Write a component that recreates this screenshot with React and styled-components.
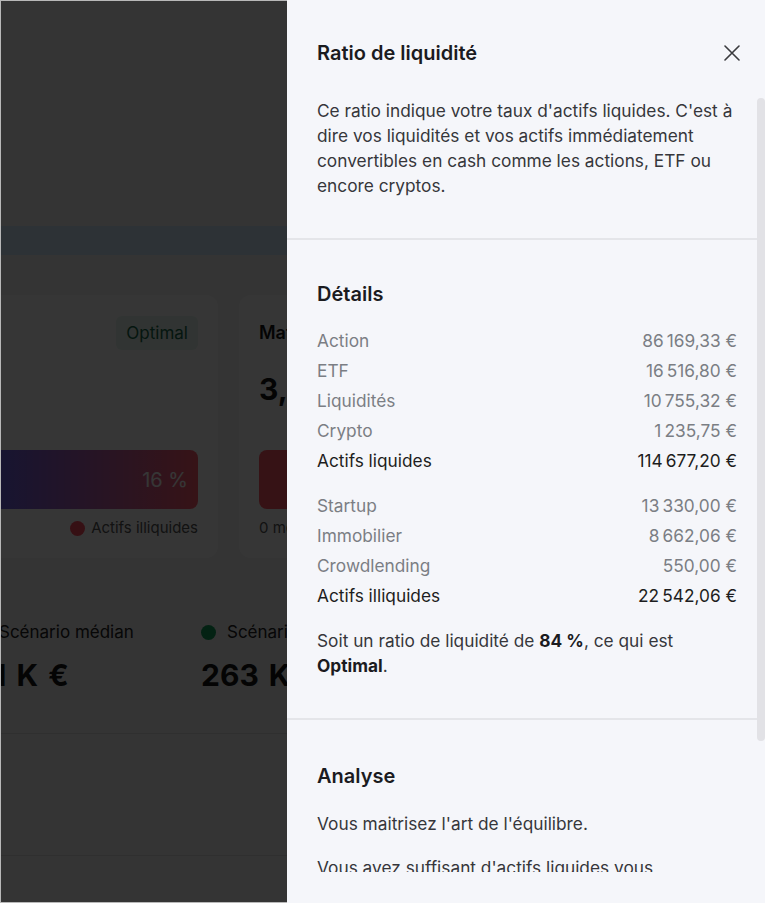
import React from 'react';
import styled, { createGlobalStyle } from 'styled-components';

const GlobalStyle = createGlobalStyle`
  html, body {
    margin: 0;
    padding: 0;
  }
  body {
    font-family: Inter, "Noto Sans", "Liberation Sans", sans-serif;
    background: #f4f4f4;
    overflow: hidden;
  }
  * {
    box-sizing: border-box;
  }
`;

// the dashboard behind the drawer, scrolled sideways
const Page = styled.div`
  width: 765px;
  height: 903px;
  overflow: hidden;
  background: #f4f4f4;
  color: #141414;
`;

const Hero = styled.div`
  height: 226px;
`;

const Banner = styled.div`
  height: 29px;
  background: #d6e9fc;
`;

const CardsRow = styled.div`
  display: flex;
  gap: 21px;
  margin: 40px 0 0 -182px;
`;

const Card = styled.div`
  flex: 0 0 400px;
  height: 263px;
  padding: 21px 20px 20px;
  background: #fff;
  border-radius: 12px;
  display: flex;
  flex-direction: column;
`;

const CardHeader = styled.div`
  display: flex;
  align-items: center;
  justify-content: space-between;
  height: 34px;
`;

const CardTitle = styled.div`
  font-size: 18px;
  font-weight: 600;
`;

const Badge = styled.span`
  padding: 0 10px;
  line-height: 34px;
  border-radius: 6px;
  background: #e6f6ee;
  color: #17694b;
  font-size: 17px;
`;

const BigValue = styled.div`
  margin-top: 21px;
  font-size: 30px;
  font-weight: 700;
  line-height: 36px;
`;

const Bar = styled.div`
  margin-top: 43px;
  height: 60px;
  border-radius: 8px;
  background: ${ ({ $fill }) => $fill };
  display: flex;
  align-items: center;
  justify-content: flex-end;
  padding-right: 10px;
  color: #fff;
  font-size: 20px;
`;

const Legend = styled.div`
  margin-top: 9px;
  display: flex;
  justify-content: space-between;
  font-size: 15px;
  line-height: 20px;
  color: #555;
`;

const LegendItem = styled.span`
  display: flex;
  align-items: center;
  gap: 6px;
`;

const Dot = styled.span`
  flex: none;
  width: 15px;
  height: 15px;
  border-radius: 50%;
  background: ${ ({ $color }) => $color };
`;

const Scenarios = styled.div`
  display: flex;
  margin: 62px 0 0 -27px;
`;

const Scenario = styled.div`
  flex: 0 0 228px;
`;

const ScenarioLabel = styled.div`
  display: flex;
  align-items: center;
  gap: 11px;
  font-size: 17px;
  line-height: 24px;
  color: #222;
`;

const ScenarioValue = styled.div`
  margin-top: 11px;
  padding-left: ${ ({ $indent }) => $indent || 0 }px;
  font-size: 30px;
  font-weight: 700;
  line-height: 40px;
  word-spacing: 3px;
`;

const RowList = styled.div`
  margin-top: 38px;
`;

const ListRow = styled.div`
  height: 122px;
  border-top: 1px solid #dbdbdb;
`;

const Overlay = styled.div`
  position: fixed;
  inset: 0;
  background: rgba(0, 0, 0, 0.79);
  box-shadow: inset 1px 1px 0 #b8b8b8, inset 0 -1px 0 #b8b8b8;
`;

// drawer
const Drawer = styled.aside`
  position: fixed;
  top: 0;
  right: 0;
  bottom: 0;
  width: 478px;
  background: #f5f6fa;
  display: flex;
  flex-direction: column;
  color: #1b1b1f;
`;

const DrawerHeader = styled.header`
  flex: none;
  height: 98px;
  padding: 39px 25px 0 30px;
  display: flex;
  align-items: flex-start;
  justify-content: space-between;
`;

const DrawerTitle = styled.h2`
  margin: 0;
  font-size: 20px;
  font-weight: 600;
  line-height: 28px;
`;

const CloseButton = styled.button`
  border: 0;
  background: none;
  padding: 0;
  width: 16px;
  height: 28px;
  display: flex;
  align-items: center;
  color: #3a3a3e;
  cursor: pointer;
`;

const DrawerBody = styled.div`
  flex: 1;
  min-height: 0;
  margin-bottom: 31px;
  display: flex;
`;

const ScrollContent = styled.div`
  flex: 1;
  min-width: 0;
  overflow: hidden;
`;

const ScrollTrack = styled.div`
  flex: none;
  width: 8px;
`;

const ScrollThumb = styled.div`
  height: 643px;
  border-radius: 4px;
  background: #e2e2e6;
`;

const Section = styled.section`
  padding: ${ ({ $top }) => $top }px 20px 40px 30px;
  border-bottom: ${ ({ $last }) => $last ? 'none' : '2px solid #e4e5e9' };
`;

const SectionTitle = styled.h3`
  margin: 0 0 ${ ({ $gap }) => $gap }px;
  font-size: 20px;
  font-weight: 600;
  line-height: 28px;
`;

const Text = styled.p`
  margin: 0;
  font-size: 17.3px;
  line-height: 25px;
  color: #36363b;
  & + & {
    margin-top: 19px;
  }
  b {
    font-weight: 700;
    color: #1b1b1f;
  }
`;

const Summary = styled(Text)`
  margin-top: 17px;
`;

const DetailGroup = styled.div`
  & + & {
    margin-top: 15px;
  }
`;

const DetailRow = styled.div`
  display: flex;
  justify-content: space-between;
  font-size: 17.3px;
  line-height: 30px;
  color: ${ ({ $total }) => $total ? '#1d1d20' : '#7b7e84' };
`;

const groups = [
    {
        rows: [
            [ 'Action', '86\u202f169,33\u00a0€' ],
            [ 'ETF', '16\u202f516,80\u00a0€' ],
            [ 'Liquidités', '10\u202f755,32\u00a0€' ],
            [ 'Crypto', '1\u202f235,75\u00a0€' ],
        ],
        total: [ 'Actifs liquides', '114\u202f677,20\u00a0€' ],
    },
    {
        rows: [
            [ 'Startup', '13\u202f330,00\u00a0€' ],
            [ 'Immobilier', '8\u202f662,06\u00a0€' ],
            [ 'Crowdlending', '550,00\u00a0€' ],
        ],
        total: [ 'Actifs illiquides', '22\u202f542,06\u00a0€' ],
    },
];

const CloseIcon = () => (
    <svg width="16" height="16" viewBox="0 0 16 16" fill="none" stroke="currentColor" strokeWidth="1.6" strokeLinecap="round">
        <path d="M1 1l14 14M15 1L1 15"/>
    </svg>
);

const Dashboard = () => (
    <Page>
        <Hero/>
        <Banner/>
        <CardsRow>
            <Card>
                <CardHeader>
                    <CardTitle>Ratio de liquidité</CardTitle>
                    <Badge>Optimal</Badge>
                </CardHeader>
                <BigValue>84 %</BigValue>
                <Bar $fill="linear-gradient(90deg, #5b5cf0 0%, #6f62e6 45%, #ff5c6c 100%)">16 %</Bar>
                <Legend>
                    <LegendItem><Dot $color="#5b5cf0"/>Actifs liquides</LegendItem>
                    <LegendItem><Dot $color="#ff4d5e"/>Actifs illiquides</LegendItem>
                </Legend>
            </Card>
            <Card>
                <CardHeader>
                    <CardTitle>Matelas de sécurité</CardTitle>
                </CardHeader>
                <BigValue>3,2 mois</BigValue>
                <Bar $fill="#ff5563"/>
                <Legend>
                    <span>0 mois</span>
                    <span>6 mois</span>
                </Legend>
            </Card>
        </CardsRow>
        <Scenarios>
            <Scenario>
                <ScenarioLabel><Dot $color="#6f62e6"/>Scénario médian</ScenarioLabel>
                <ScenarioValue $indent={ 1 }>91 K €</ScenarioValue>
            </Scenario>
            <Scenario>
                <ScenarioLabel><Dot $color="#11a05a"/>Scénario optimiste</ScenarioLabel>
                <ScenarioValue>263 K €</ScenarioValue>
            </Scenario>
        </Scenarios>
        <RowList>
            <ListRow/>
            <ListRow/>
        </RowList>
    </Page>
);

const App = () => (
    <>
        <GlobalStyle/>
        <Dashboard/>
        <Overlay/>
        <Drawer>
            <DrawerHeader>
                <DrawerTitle>Ratio de liquidité</DrawerTitle>
                <CloseButton aria-label="Fermer"><CloseIcon/></CloseButton>
            </DrawerHeader>
            <DrawerBody>
                <ScrollContent>
                    <Section $top={ 0 }>
                        <Text>
                            Ce ratio indique votre taux d'actifs liquides. C'est à dire vos liquidités et vos actifs
                            immédiatement convertibles en cash comme les actions, ETF ou encore cryptos.
                        </Text>
                    </Section>
                    <Section $top={ 40 }>
                        <SectionTitle $gap={ 18 }>Détails</SectionTitle>
                        { groups.map((group, i) => (
                            <DetailGroup key={ i }>
                                { group.rows.map(([ label, value ]) => (
                                    <DetailRow key={ label }><span>{ label }</span><span>{ value }</span></DetailRow>
                                )) }
                                <DetailRow $total><span>{ group.total[0] }</span><span>{ group.total[1] }</span></DetailRow>
                            </DetailGroup>
                        )) }
                        <Summary>
                            Soit un ratio de liquidité de <b>84 %</b>, ce qui est <b>Optimal</b>.
                        </Summary>
                    </Section>
                    <Section $top={ 42 } $last>
                        <SectionTitle $gap={ 21 }>Analyse</SectionTitle>
                        <Text>Vous maitrisez l'art de l'équilibre.</Text>
                        <Text>
                            Vous avez suffisant d'actifs liquides vous permettant de faire face aux imprévus et de
                            saisir des opportunités, tout en laissant une part de votre patrimoine travailler sur le
                            long terme dans des actifs moins liquides.
                        </Text>
                    </Section>
                </ScrollContent>
                <ScrollTrack>
                    <ScrollThumb/>
                </ScrollTrack>
            </DrawerBody>
        </Drawer>
    </>
);

export default App;
